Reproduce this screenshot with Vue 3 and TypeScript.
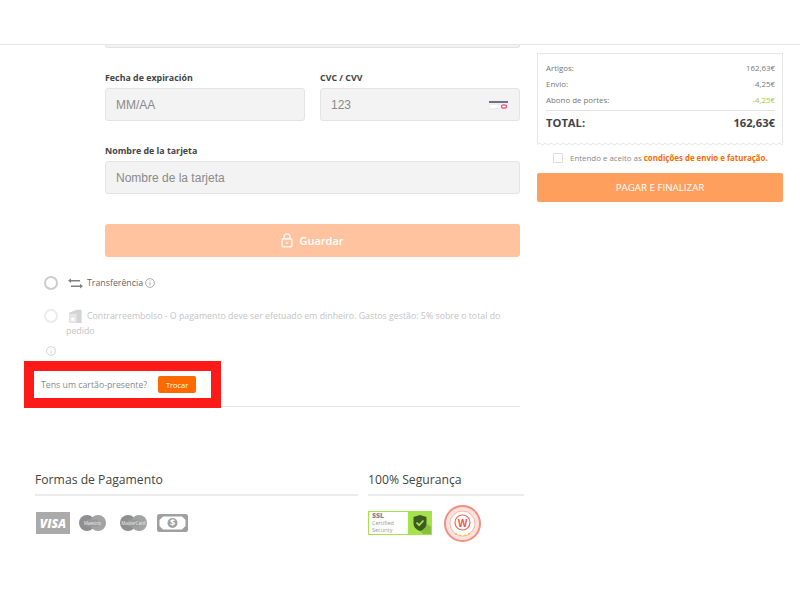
<script setup lang="ts">
interface Row { label: string; value: string; green?: boolean }
const rows: Row[] = [
  { label: 'Artigos:', value: '162,63€' },
  { label: 'Envio:', value: '4,25€' },
  { label: 'Abono de portes:', value: '-4,25€', green: true },
]
</script>

<template>
  <div class="page">
    <header class="topbar"></header>
    <div class="main">
      <section class="left">
        <div class="form">
          <div class="peek"></div>
          <div class="two">
            <div class="field">
              <label>Fecha de expiración</label>
              <div class="input">MM/AA</div>
            </div>
            <div class="field">
              <label>CVC / CVV</label>
              <div class="input cvc">
                <span>123</span>
                <svg width="20" height="10" viewBox="0 0 20 10">
                  <rect x="0" y="0" width="20" height="10" rx="1" fill="#eceef2" />
                  <rect x="0" y="1" width="19" height="2" fill="#6d7486" />
                  <rect x="1" y="5" width="11" height="3" fill="#fff" />
                  <ellipse cx="15" cy="6.5" rx="2.6" ry="1.7" fill="#fff" stroke="#e8557f" stroke-width="1.2" />
                </svg>
              </div>
            </div>
          </div>
          <div class="field name">
            <label>Nombre de la tarjeta</label>
            <div class="input">Nombre de la tarjeta</div>
          </div>
          <button class="save">
            <svg width="12" height="15" viewBox="0 0 14 17" fill="none" stroke="#fff" stroke-width="1.4">
              <path d="M3.5 7V4.2a3.5 3.5 0 0 1 7 0V7" />
              <rect x="1.2" y="6.6" width="11.6" height="9.4" rx="2" />
              <path d="M7 10.3v2.4" stroke-width="1.6" />
            </svg>
            Guardar
          </button>
        </div>

        <div class="method m1">
          <span class="radio"></span>
          <svg class="micon" width="15" height="11" viewBox="0 0 15 11" fill="#808080">
            <path d="M0 2.6 3 .4v1.5h9v1.6H3V5z" />
            <path d="M15 8.2 12 10.6V9H3V7.4h9V5.800z" />
          </svg>
          <span class="mtext">Transferência</span>
          <svg class="info" width="10" height="10" viewBox="0 0 10 10" fill="none" stroke="#999" stroke-width=".8">
            <circle cx="5" cy="5" r="4.4" />
            <path d="M5 4.4v3M5 2.4v1" />
          </svg>
        </div>

        <div class="method m2">
          <div class="mline">
            <span class="radio"></span>
            <svg class="micon box" width="14" height="14" viewBox="0 0 13 13">
              <path d="M1 3.5 8 .8h4.600V13H1z" fill="#d4d4d4" />
              <path d="M1 4.500h7V13H1z" fill="#e6e6e6" />
              <path d="M3 8h3v3H3z" fill="#fff" />
            </svg>
            <span class="mtext">Contrarreembolso - O pagamento deve ser efetuado em dinheiro. Gastos gestão: 5% sobre o total do</span>
          </div>
          <div class="wrap">pedido</div>
          <svg class="info2" width="10" height="10" viewBox="0 0 10 10" fill="none" stroke="#ccc" stroke-width=".8">
            <circle cx="5" cy="5" r="4.4" />
            <path d="M5 4.4v3M5 2.4v1" />
          </svg>
        </div>

        <div class="gift-line">
          <div class="gift">
            <span>Tens um cartão-presente?</span>
            <button class="swap">Trocar</button>
          </div>
        </div>

        <div class="footer">
          <div class="fcol pay">
            <h3>Formas de Pagamento</h3>
            <div class="logos">
              <span class="visa">VISA</span>
              <svg width="27" height="16" viewBox="0 0 27 16">
                <circle cx="8" cy="8" r="8" fill="#8f8f8f" />
                <circle cx="19" cy="8" r="8" fill="#a3a3a3" />
                <rect x="8" y="4.500" width="11" height="7" fill="#999" />
                <text x="13.500" y="9.800" text-anchor="middle" class="mini">Maestro</text>
              </svg>
              <svg class="mc" width="27" height="16" viewBox="0 0 27 16">
                <circle cx="8" cy="8" r="8" fill="#8f8f8f" />
                <circle cx="19" cy="8" r="8" fill="#a3a3a3" />
                <rect x="8" y="4.500" width="11" height="7" fill="#999" />
                <text x="13.500" y="9.800" text-anchor="middle" class="mini">MasterCard</text>
              </svg>
              <svg class="cash" width="31" height="18" viewBox="0 0 31 18">
                <rect width="31" height="18" rx="2.500" fill="#a0a0a0" />
                <path d="M6 2.500h19l3.500 3.500v6L25 15.500H6L2.500 12V6z" fill="#fff" />
                <circle cx="15.500" cy="9" r="5" fill="#a0a0a0" />
                <text x="15.500" y="12" text-anchor="middle" class="dollar">$</text>
              </svg>
            </div>
          </div>
          <div class="fcol sec">
            <h3>100% Segurança</h3>
            <div class="logos">
              <div class="ssl">
                <div class="ssl-t"><b>SSL</b><span>Certified</span><span>Security</span></div>
                <div class="ssl-g">
                  <svg width="22" height="22" viewBox="0 0 22 22">
                    <path d="M11 19 18 12 24 16 24 24 16 24z" fill="#86c03a" />
                    <path d="M11 3 17.500 5v6c0 4-2.500 6.500-6.500 8-4-1.500-6.500-4-6.500-8V5z" fill="#3c5a22" />
                    <path d="m7.500 10.500 2.600 2.700 4.400-4.700" fill="none" stroke="#a6e64a" stroke-width="1.800" />
                  </svg>
                </div>
              </div>
              <svg class="seal" width="37" height="37" viewBox="0 0 37 37">
                <circle cx="18.500" cy="18.500" r="17.500" fill="#fde3dc" stroke="#f28f80" stroke-width="2" />
                <circle cx="18.500" cy="18.500" r="12.500" fill="#fff" stroke="#f7b5a8" stroke-width="1" />
                <circle cx="18.500" cy="17.500" r="7.500" fill="#fff" stroke="#ef6a5a" stroke-width="1.200" />
                <text x="18.500" y="21.500" text-anchor="middle" class="w">W</text>
                <circle cx="12" cy="29" r="1" fill="#f5c33b" />
                <circle cx="16" cy="30.500" r="1" fill="#f5c33b" />
                <circle cx="21" cy="30.500" r="1" fill="#f5c33b" />
                <circle cx="25" cy="29" r="1" fill="#f5c33b" />
              </svg>
            </div>
          </div>
        </div>
      </section>

      <aside class="right">
        <div class="summary">
          <div v-for="r in rows" :key="r.label" class="row">
            <span>{{ r.label }}</span>
            <span :class="{ green: r.green }">{{ r.value }}</span>
          </div>
          <div class="total">
            <span>TOTAL:</span>
            <span>162,63€</span>
          </div>
          <svg class="wave" width="246" height="4" aria-hidden="true">
            <defs>
              <pattern id="wv" width="6" height="4" patternUnits="userSpaceOnUse">
                <path d="M0 3 Q1.500 0 3 1.500 Q4.500 3 6 3" fill="none" stroke="#e6e6e6" stroke-width="1" />
              </pattern>
            </defs>
            <rect width="246" height="4" fill="url(#wv)" />
          </svg>
        </div>
        <div class="agree">
          <span class="check"></span>
          <span class="atext">Entendo e aceito as <b>condições de envio e faturação.</b></span>
        </div>
        <button class="pay-btn">PAGAR E FINALIZAR</button>
      </aside>
    </div>
  </div>
</template>

<style scoped>
.page {
  width: 800px;
  height: 600px;
  overflow: hidden;
  background: #fff;
  font-family: "Open Sans", "Liberation Sans", sans-serif;
  color: #444;
}
.topbar {
  height: 44px;
  border-bottom: 1px solid #e3e6ea;
  box-sizing: content-box;
}
.main {
  display: flex;
}
.left {
  width: 537px;
  flex: none;
}
.form {
  margin-left: 105px;
  width: 415px;
}
.peek {
  height: 2px;
  background: #f3f3f3;
  border: 1px solid #e3e3e3;
  border-top: 0;
  border-radius: 0 0 3px 3px;
}
.two {
  display: flex;
  gap: 15px;
  margin-top: 23px;
}
.two .field {
  flex: 1;
}
.field label {
  display: block;
  font-size: 8.85px;
  line-height: 15px;
  font-weight: 700;
  color: #444;
  margin-bottom: 2px;
}
.name {
  margin-top: 23px;
}
.input {
  height: 33px;
  box-sizing: border-box;
  background: #f3f3f3;
  border: 1px solid #e4e4e4;
  border-radius: 3px;
  padding: 0 10px;
  display: flex;
  align-items: center;
  font-family: "Liberation Sans", Arial, sans-serif;
  font-size: 12px;
  color: #8a8a8a;
}
.cvc {
  justify-content: space-between;
}
.save {
  margin-top: 30px;
  width: 100%;
  height: 33px;
  border: 0;
  border-radius: 3px;
  background: #ffc49f;
  color: #fff;
  font-family: inherit;
  font-size: 11px;
  font-weight: 600;
  display: flex;
  align-items: center;
  justify-content: center;
  gap: 6px;
}
.method {
  font-size: 8.8px;
  color: #666;
}
.m1 {
  margin: 18px 0 0 44px;
  display: flex;
  align-items: center;
  height: 16px;
}
.radio {
  width: 14px;
  height: 14px;
  flex: none;
  box-sizing: border-box;
  border: 2px solid #ccc;
  border-radius: 50%;
}
.micon {
  margin-left: 10px;
  flex: none;
}
.mtext {
  margin-left: 4px;
  white-space: nowrap;
}
.info {
  margin-left: 2px;
}
.m2 {
  margin: 17px 0 0 44px;
  color: #c4c4c4;
}
.m2 .radio {
  border-color: #ececec;
}
.mline {
  display: flex;
  align-items: center;
  height: 16px;
}
.m2 .mtext {
  margin-left: 5px;
}
.wrap {
  margin: 0 0 0 22px;
  line-height: 14px;
}
.info2 {
  display: block;
  margin: 8px 0 0 2px;
}
.gift-line {
  position: relative;
  margin: 5px 0 0 34px;
  width: 486px;
  height: 46px;
  box-sizing: border-box;
  border-bottom: 1px solid #e6e6e6;
}
.gift {
  position: absolute;
  left: -10px;
  top: 0;
  width: 197px;
  height: 47px;
  box-sizing: border-box;
  border: 10px solid #ff1a1a;
  background: #fff;
  display: flex;
  align-items: center;
  padding: 0 0 0 7px;
  font-size: 8.75px;
  color: #8a8a8a;
  white-space: nowrap;
}
.swap {
  margin-left: 11px;
  width: 38px;
  height: 17px;
  border: 0;
  border-radius: 2px;
  background: #ff6a00;
  color: #fff;
  font-family: inherit;
  font-size: 7.4px;
  padding: 0;
}
.footer {
  display: flex;
  margin: 64px 0 0 35px;
  gap: 10px;
}
.fcol h3 {
  margin: 0;
  font-size: 12.2px;
  line-height: 18px;
  font-weight: 400;
  color: #444;
  padding-bottom: 5px;
  border-bottom: 2px solid #ececec;
}
.pay {
  width: 323px;
}
.sec {
  width: 156px;
}
.logos {
  display: flex;
  align-items: center;
  margin-top: 12px;
  height: 30px;
}
.pay .logos {
  margin-left: 1px;
  gap: 9px;
}
.visa {
  width: 34px;
  height: 22px;
  background: #aaa;
  color: #fff;
  font-size: 12px;
  font-weight: 800;
  font-style: italic;
  display: flex;
  align-items: center;
  justify-content: center;
}
.mini {
  font-size: 4.400px;
  fill: #ededed;
}
.mc {
  margin-left: 5px;
}
.cash {
  margin-left: 1px;
}
.dollar {
  font-size: 9px;
  font-weight: 700;
  fill: #fff;
}
.ssl {
  width: 64px;
  height: 24px;
  display: flex;
  background: #a4e34b;
  box-sizing: border-box;
  padding: 1px;
  overflow: hidden;
}
.ssl-t {
  width: 39px;
  flex: none;
  background: #fff;
  display: flex;
  flex-direction: column;
  padding-left: 3px;
  box-sizing: border-box;
  font-size: 5.500px;
  line-height: 6.500px;
  color: #999;
}
.ssl-t b {
  font-size: 7px;
  line-height: 8px;
  font-weight: 800;
  color: #888;
}
.ssl-g {
  flex: 1;
  display: flex;
  align-items: center;
  justify-content: center;
}
.seal {
  margin-left: 12px;
}
.w {
  font-size: 10px;
  font-weight: 700;
  fill: #ef5a4a;
}
.right {
  width: 246px;
  margin-top: 8px;
}
.summary {
  position: relative;
  height: 90px;
  box-sizing: border-box;
  border: 1px solid #e6e6e6;
  border-bottom: 0;
  padding: 6px 7px 0 8px;
}
.row {
  display: flex;
  justify-content: space-between;
  font-size: 7.9px;
  line-height: 16px;
  color: #777;
}
.green {
  color: #9ccc3c;
}
.total {
  display: flex;
  justify-content: space-between;
  margin-top: 2px;
  border-top: 1px solid #e2e2e2;
  padding-top: 3px;
  font-size: 11.2px;
  line-height: 18px;
  font-weight: 700;
  color: #444;
}
.wave {
  position: absolute;
  left: -1px;
  bottom: -3px;
}
.agree {
  display: flex;
  align-items: center;
  margin: 10px 0 0 16px;
  height: 10px;
}
.check {
  width: 10px;
  height: 10px;
  flex: none;
  box-sizing: border-box;
  border: 1px solid #ddd;
  border-radius: 1px;
}
.atext {
  margin-left: 7px;
  font-size: 7.9px;
  color: #888;
  white-space: nowrap;
}
.atext b {
  color: #ff6a00;
  font-weight: 700;
}
.pay-btn {
  display: block;
  margin-top: 10px;
  width: 100%;
  height: 29px;
  border: 0;
  border-radius: 2px;
  background: #ff9f5e;
  color: #fff;
  font-family: inherit;
  font-size: 9.750px;
}
</style>
